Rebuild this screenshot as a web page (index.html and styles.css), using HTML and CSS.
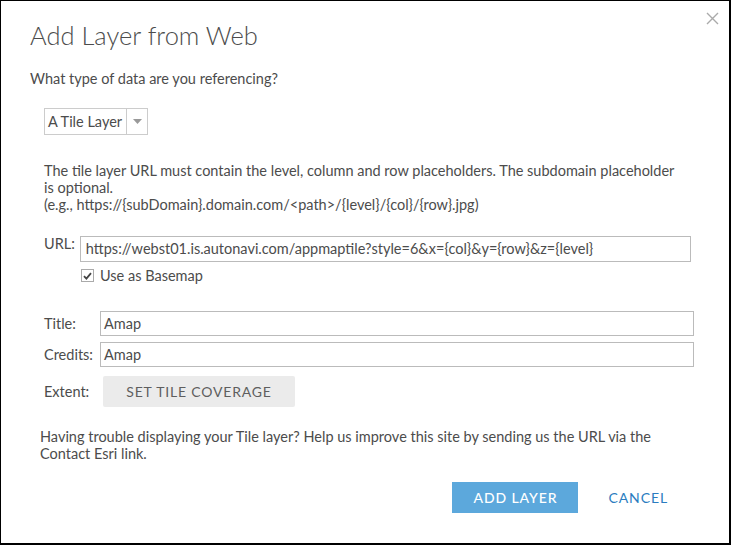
FILE: index.html
```html
<!DOCTYPE html>
<html>
<head>
<meta charset="utf-8">
<link rel="stylesheet" href="styles.css">
</head>
<body>
<div class="dialog">
  <div class="close"><svg width="13" height="13" viewBox="0 0 13 13"><path d="M1 1 L12 12 M12 1 L1 12" stroke="#aaa" stroke-width="1.4" fill="none"/></svg></div>
  <h1 class="title">Add Layer from Web</h1>
  <p class="question">What type of data are you referencing?</p>
  <div class="content">
    <div class="select">
      <span class="select-text">A Tile Layer</span>
      <span class="select-arrow"><svg width="9" height="5" viewBox="0 0 9 5"><path d="M0 0 L9 0 L4.5 5 Z" fill="#999"/></svg></span>
    </div>
    <p class="info">The tile layer URL must contain the level, column and row placeholders. The subdomain placeholder is optional.<br>(e.g., https://{subDomain}.domain.com/&lt;path&gt;/{level}/{col}/{row}.jpg)</p>
    <div class="url-row">
      <span class="url-label">URL:</span>
      <div class="input url-input">https://webst01.is.autonavi.com/appmaptile?style=6&amp;x={col}&amp;y={row}&amp;z={level}</div>
    </div>
    <div class="check-row">
      <span class="checkbox"><svg width="9" height="8" viewBox="0 0 9 8"><path d="M1 4.2 L3.4 6.6 L8 1.2" fill="none" stroke="#444" stroke-width="1.8"/></svg></span>
      <span>Use as Basemap</span>
    </div>
    <div class="fields">
      <span class="flabel">Title:</span>
      <div class="input">Amap</div>
      <span class="flabel">Credits:</span>
      <div class="input">Amap</div>
      <span class="flabel ext">Extent:</span>
      <div class="ext-cell"><span class="btn-gray">SET TILE COVERAGE</span></div>
    </div>
  </div>
  <p class="help">Having trouble displaying your Tile layer? Help us improve this site by sending us the URL via the Contact Esri link.</p>
  <div class="footer">
    <span class="btn-primary">ADD LAYER</span>
    <span class="btn-link">CANCEL</span>
  </div>
</div>
</body>
</html>
```
FILE: styles.css
```css
html, body {
  margin: 0;
  padding: 0;
  background: #fff;
}
.dialog {
  box-sizing: border-box;
  width: 731px;
  height: 545px;
  border-top: 1px solid #000;
  border-left: 1px solid #000;
  border-right: 2px solid #000;
  border-bottom: 2px solid #000;
  position: relative;
  font-family: Lato, "Noto Sans", sans-serif;
  color: #4c4c4c;
  font-size: 14.5px;
  padding: 0 0 0 29px;
}
.close {
  position: absolute;
  right: 10px;
  top: 11px;
  line-height: 0;
}
.title {
  margin: 19px 0 0 0;
  font-size: 25.5px;
  font-weight: 300;
  line-height: 30px;
  color: #4c4c4c;
}
.question {
  margin: 19px 0 0 0;
  line-height: 20px;
}
.content {
  padding-left: 14px;
}
.select {
  margin-top: 19px;
  display: inline-flex;
  height: 27px;
  box-sizing: border-box;
  border: 1px solid #ccc;
  align-items: stretch;
}
.select-text {
  padding: 0 4px 0 3px;
  line-height: 25px;
}
.select-arrow {
  width: 20px;
  border-left: 1px solid #ccc;
  display: flex;
  align-items: center;
  justify-content: center;
}
.info {
  margin: 27px 0 0 0;
  line-height: 17px;
  width: 640px;
}
.url-row {
  display: flex;
  align-items: flex-start;
  margin-top: 23px;
  gap: 5px;
}
.url-label {
  line-height: 16px;
}
.input {
  box-sizing: border-box;
  border: 1px solid #bbb;
  height: 26px;
  line-height: 24px;
  padding: 0 5px;
}
.url-input {
  width: 611px;
  padding-left: 5px;
}
.check-row {
  display: flex;
  align-items: center;
  gap: 6px;
  margin: 5px 0 0 37px;
}
.checkbox {
  width: 11px;
  height: 11px;
  border: 1px solid #aaa;
  display: flex;
  align-items: center;
  justify-content: center;
}
.fields {
  margin-top: 27px;
  display: grid;
  grid-template-columns: 56px 594px;
  row-gap: 6px;
  align-items: center;
}
.fields .input {
  height: 25px;
  line-height: 23px;
  padding-left: 3px;
}
.ext-cell {
  padding: 3px 0 0 3px;
}
.btn-gray {
  display: inline-block;
  background: #ebebeb;
  color: #5e5e5e;
  width: 192px;
  height: 31px;
  line-height: 31px;
  text-align: center;
  letter-spacing: 0.8px;
  font-size: 14px;
  border-radius: 2px;
}
.flabel.ext {
  padding-top: 3px;
}
.help {
  margin: 21px 0 0 -19px;
  padding-left: 29px;
  line-height: 17px;
  width: 640px;
}
.footer {
  display: flex;
  justify-content: flex-end;
  align-items: center;
  margin-top: 20px;
  padding-right: 61px;
  gap: 30px;
}
.btn-primary {
  background: #5ca8dc;
  color: #fff;
  width: 126px;
  height: 31px;
  line-height: 31px;
  text-align: center;
  letter-spacing: 0.9px;
  font-size: 14px;
  font-weight: 500;
}
.btn-link {
  color: #2b7cc0;
  letter-spacing: 0.9px;
  font-size: 14px;
}
```
